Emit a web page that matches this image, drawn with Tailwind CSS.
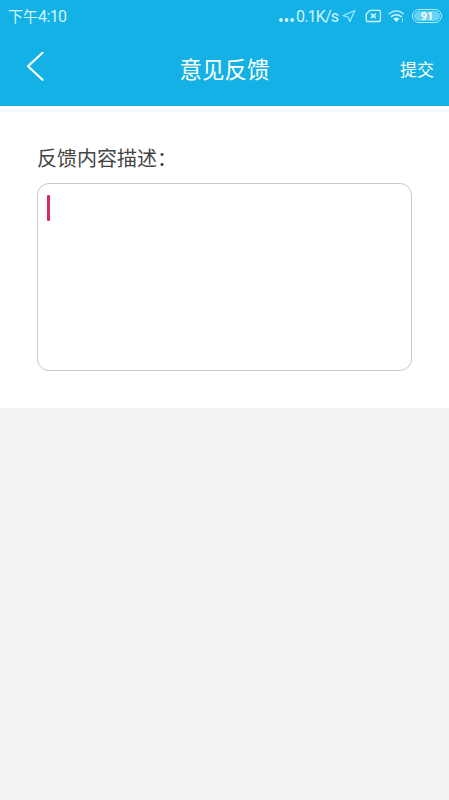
<!DOCTYPE html>
<html lang="zh-CN">
<head>
<meta charset="UTF-8">
<title>意见反馈</title>
<script src="https://cdn.jsdelivr.net/npm/@tailwindcss/browser@4"></script>
</head>
<body class="flex h-[800px] w-[449px] flex-col overflow-hidden bg-[#f3f3f3] font-['Noto_Sans_CJK_SC',sans-serif]">
<header class="h-[106px] shrink-0 bg-[#14b1e6] text-white">
  <div class="flex h-8 items-center justify-between pl-2 pr-[7px] text-[#d3f5ff]">
    <span class="pt-px text-[15px] leading-none font-['Roboto','Noto_Sans_CJK_SC',sans-serif]">下午<span class="text-[16px] tracking-[-0.6px]">4:10</span></span>
    <div class="flex items-center">
      <svg class="mt-[7px] mr-px h-1 w-4" viewBox="0 0 16 4" fill="currentColor"><circle cx="2" cy="2" r="1.9"/><circle cx="7.6" cy="2" r="1.9"/><circle cx="13.2" cy="2" r="1.9"/></svg>
      <span class="w-[46px] whitespace-nowrap pt-[2px] font-['Roboto',sans-serif] text-[16px] leading-none tracking-[-0.8px]">0.1K/s</span>
      <svg class="h-[14px] w-[14px]" viewBox="0 0 14 14" fill="none" stroke="#95e6ff" stroke-width="1.3" stroke-linejoin="round"><path d="M12.8 1.5 1.2 6.7l5 1.4 1.7 4.5Z"/></svg>
      <svg class="ml-[9px] h-[14px] w-[17px]" viewBox="0 0 17 14" fill="none" stroke="currentColor" stroke-width="1.3"><path d="M5 1.3h9.2q1.2 0 1.2 1.2v8.8q0 1.2-1.2 1.2H2.5q-1.2 0-1.2-1.2V5Z"/><path d="m6 4.7 4.8 4.5m0-4.5L6 9.2" stroke-width="1.6"/></svg>
      <svg class="ml-[6px] mr-px h-[14px] w-[17px]" viewBox="0 0 17 14" fill="none" stroke="currentColor" stroke-width="1.7"><path d="M.8 5.1Q8.3-1.2 15.8 5.1" stroke="#95e6ff"/><path d="M3.1 7.8q5.2-4.1 10.4 0"/><path d="m5.2 9.7 3.1 3.4 3.1-3.4q-3.1-2.2-6.2 0Z" fill="currentColor" stroke="none"/><path d="M14.4 9v4.3" stroke="#95e6ff" stroke-width="1.1"/></svg>
      <div class="ml-[6px] flex h-[14px] w-[30px] items-center justify-center rounded-full border border-[#b5efff] p-px"><span class="flex h-full w-full items-center justify-center rounded-full bg-[#68d3f4] font-['Roboto',sans-serif] text-[11px] font-bold leading-none text-white">91</span></div>
    </div>
  </div>
  <nav class="grid h-[74px] grid-cols-[1fr_auto_1fr] items-center pl-[26px] pr-[15px]">
    <svg class="mb-[7px] h-[30px] w-[19px] justify-self-start" viewBox="0 0 19 30" fill="none" stroke="white" stroke-width="2.2" stroke-linecap="round" stroke-linejoin="round"><path d="M16.5 1.8 2 15.3l14.5 13.5"/></svg>
    <h1 class="-ml-[11px] pb-px text-[22.5px] font-normal leading-none">意见反馈</h1>
    <span class="justify-self-end pb-px text-[17px] leading-none">提交</span>
  </nav>
</header>
<main class="flex h-[302px] shrink-0 flex-col bg-white px-[37px] pt-[35px]">
  <label class="h-[42px] text-[20px] leading-[34px] text-[#444]">反馈内容描述：</label>
  <div class="h-[188px] w-[375px] rounded-[12px] border border-[#c9c9c9] px-[9px] pt-[11px]"><div class="h-[26px] w-[3px] rounded-[1px] bg-[#d52b67]"></div></div>
</main>
</body>
</html>
